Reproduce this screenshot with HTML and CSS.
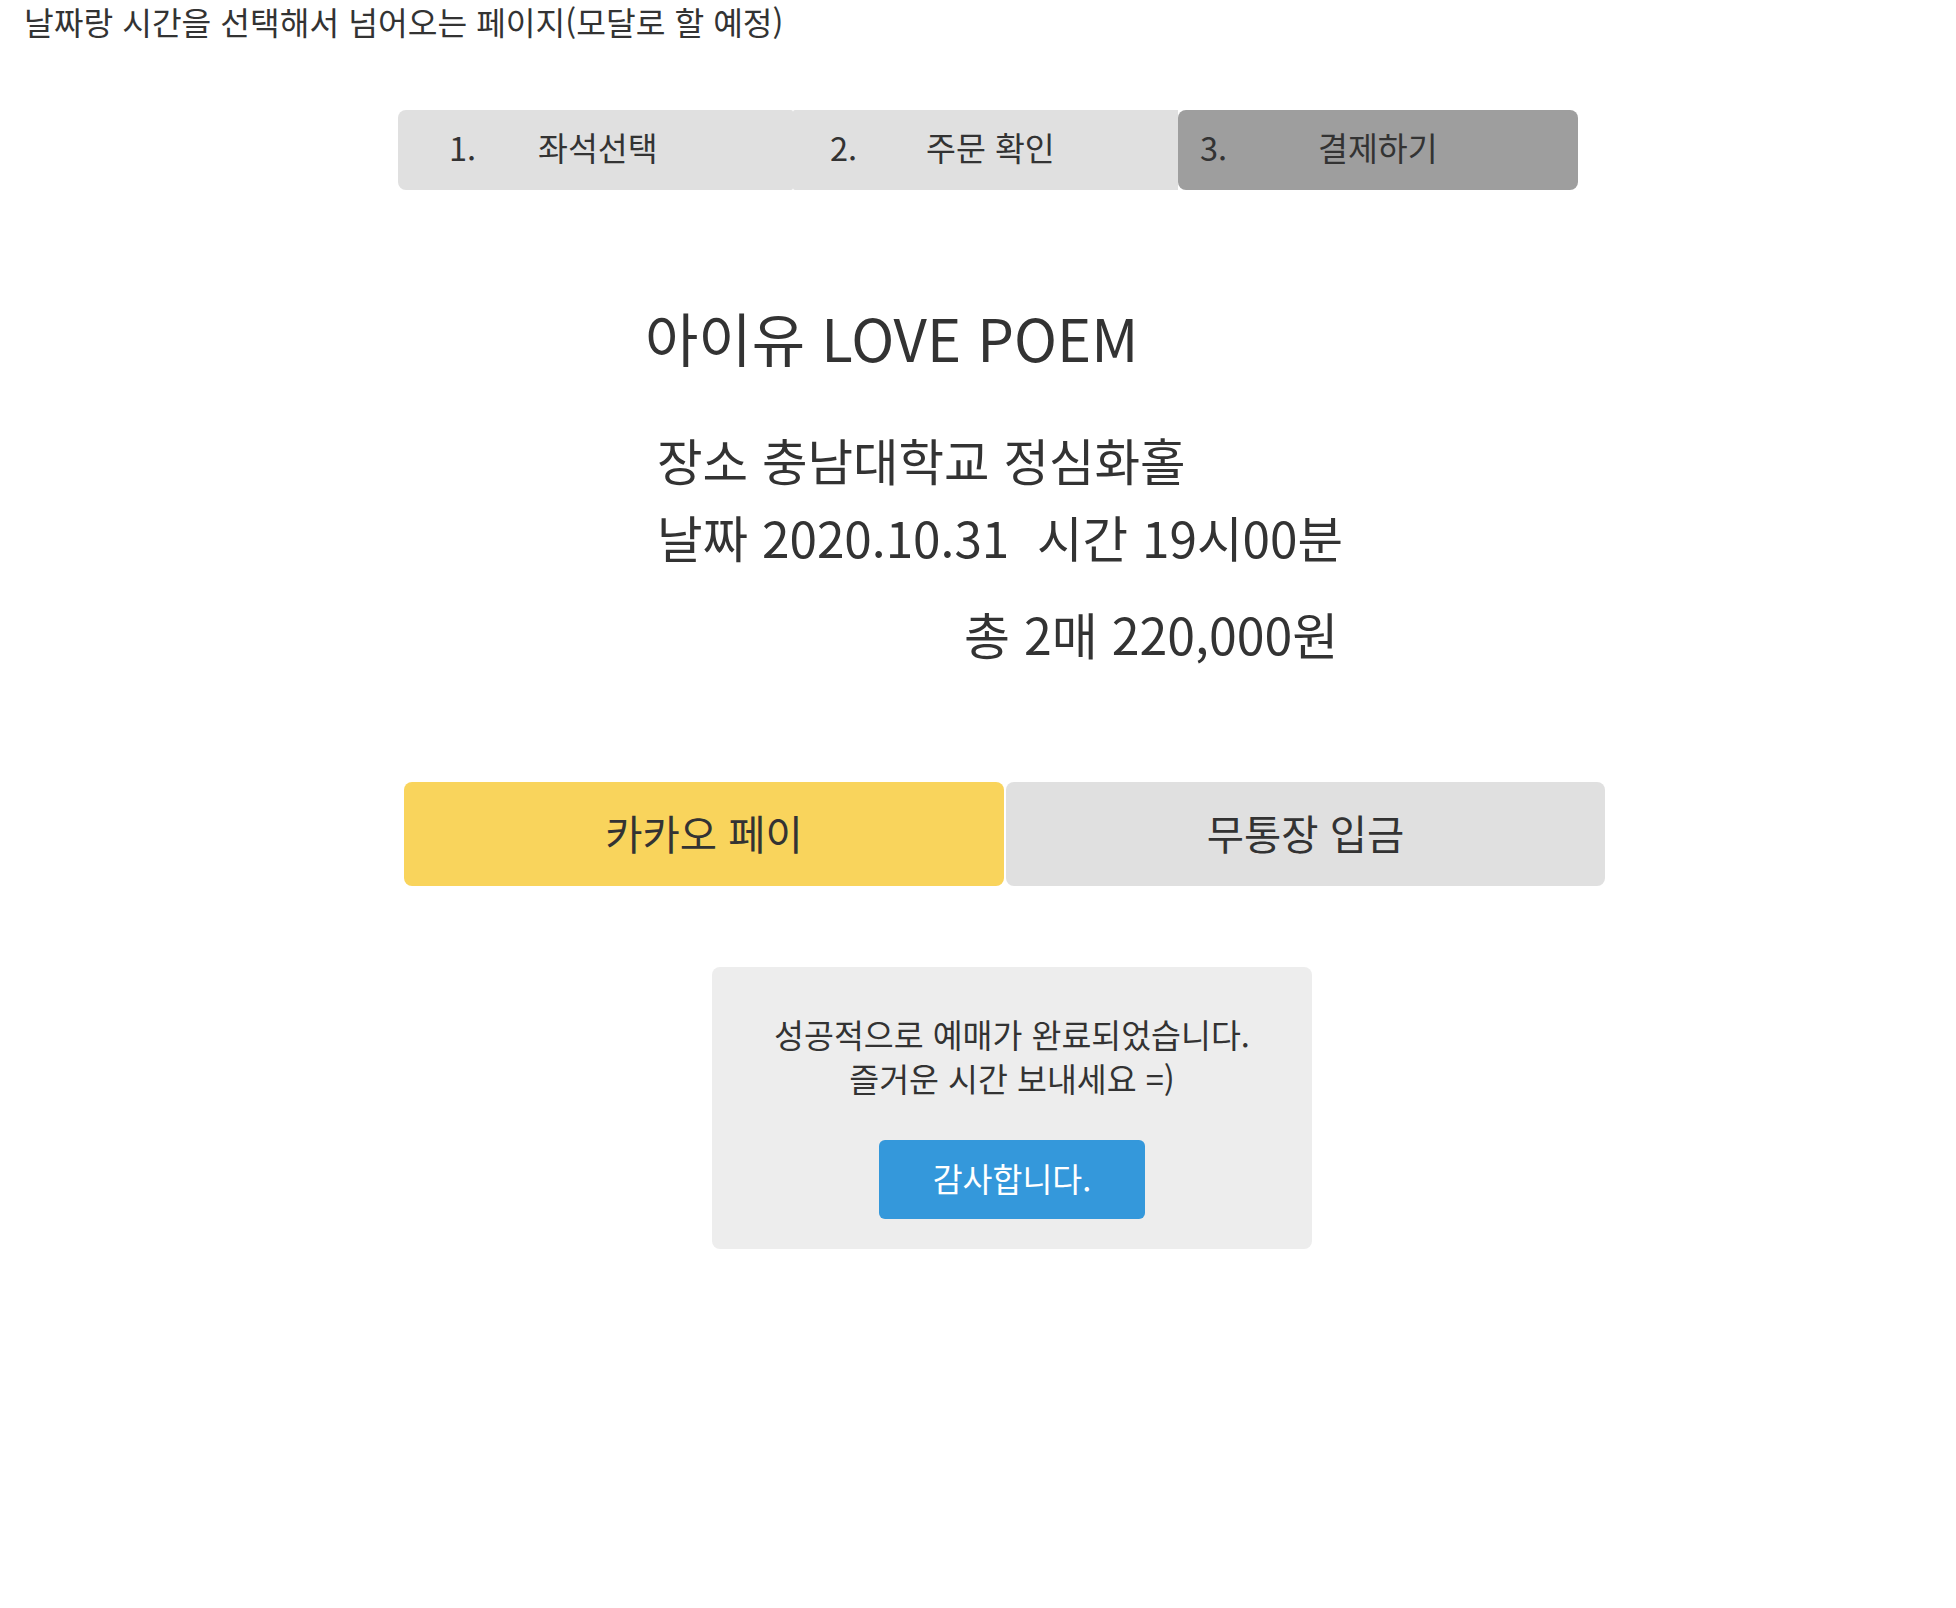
FILE: index.html
```html
<!DOCTYPE html>
<html lang="ko">
<head>
<meta charset="utf-8">
<title>결제하기</title>
<link rel="stylesheet" href="styles.css">
</head>
<body>
<p class="note">날짜랑 시간을 선택해서 넘어오는 페이지(모달로 할 예정)</p>
<ol class="steps">
  <li class="step step-1"><span class="num">1.</span><span class="label">좌석선택</span></li>
  <li class="step step-2"><span class="num">2.</span><span class="label">주문 확인</span></li>
  <li class="step step-3 active"><span class="num">3.</span><span class="label">결제하기</span></li>
</ol>
<h1 class="title">아이유 LOVE POEM</h1>
<div class="info">
  <p class="info-line">장소 충남대학교 정심화홀</p>
  <p class="info-line">날짜 2020.10.31&nbsp; 시간 19시00분</p>
</div>
<p class="total">총 2매 220,000원</p>
<div class="pay">
  <button class="pay-btn kakao">카카오 페이</button>
  <button class="pay-btn bank">무통장 입금</button>
</div>
<div class="modal">
  <p class="modal-text">성공적으로 예매가 완료되었습니다.<br>즐거운 시간 보내세요 =)</p>
  <button class="thanks">감사합니다.</button>
</div>
</body>
</html>
```

FILE: styles.css
```css
html, body {
  margin: 0;
  padding: 0;
  background: #ffffff;
}
body {
  font-family: "Noto Sans CJK KR", "Noto Sans", sans-serif;
  color: #333333;
}
.note {
  margin: 0;
  padding-left: 24px;
  font-size: 32.3px;
  line-height: 42px;
}
.steps {
  list-style: none;
  margin: 68px 0 0 398px;
  padding: 0;
  width: 1180px;
  height: 80px;
  display: flex;
  font-size: 32.5px;
}
.step {
  display: flex;
  align-items: center;
  background: #e0e0e0;
  height: 80px;
  box-sizing: border-box;
  padding-bottom: 8px;
}
.step-1 {
  width: 395px;
  padding-left: 51px;
  border-radius: 8px 2px 2px 8px;
}
.step-1 .num { width: 89px; }
.step-2 {
  width: 385px;
  padding-left: 37px;
  border-radius: 2px 0 0 2px;
}
.step-2 .num { width: 96px; }
.step-3 {
  width: 400px;
  padding-left: 22px;
  border-radius: 8px;
}
.step-3 .num { width: 118px; }
.step.active {
  background: #9e9e9e;
}
.num {
  display: inline-block;
}
.title {
  margin: 107px 0 0 645px;
  font-size: 58px;
  font-weight: 400;
  line-height: 80px;
}
.info {
  margin: 44px 0 0 657px;
}
.info-line {
  margin: 0;
  font-size: 49.5px;
  line-height: 77px;
}
.total {
  margin: 19px 0 0 964px;
  font-size: 50px;
  line-height: 78px;
}
.pay {
  margin: 110px 0 0 404px;
  display: flex;
  gap: 2px;
}
.pay-btn {
  height: 104px;
  border: none;
  border-radius: 8px;
  font-family: inherit;
  font-size: 40.5px;
  color: #333333;
  padding: 0 0 4px;
}
.kakao {
  width: 600px;
  background: #f9d45c;
}
.bank {
  width: 599px;
  background: #e0e0e0;
}
.modal {
  margin: 81px 0 0 712px;
  width: 600px;
  box-sizing: border-box;
  padding: 45px 0 30px;
  background: #ededed;
  border-radius: 8px;
  text-align: center;
}
.modal-text {
  margin: 0;
  font-size: 32.5px;
  line-height: 44px;
}
.thanks {
  margin-top: 40px;
  width: 266px;
  height: 79px;
  border: none;
  border-radius: 6px;
  background: #3498db;
  color: #ffffff;
  font-family: inherit;
  font-size: 32.5px;
  padding: 0 0 4px;
}
```
